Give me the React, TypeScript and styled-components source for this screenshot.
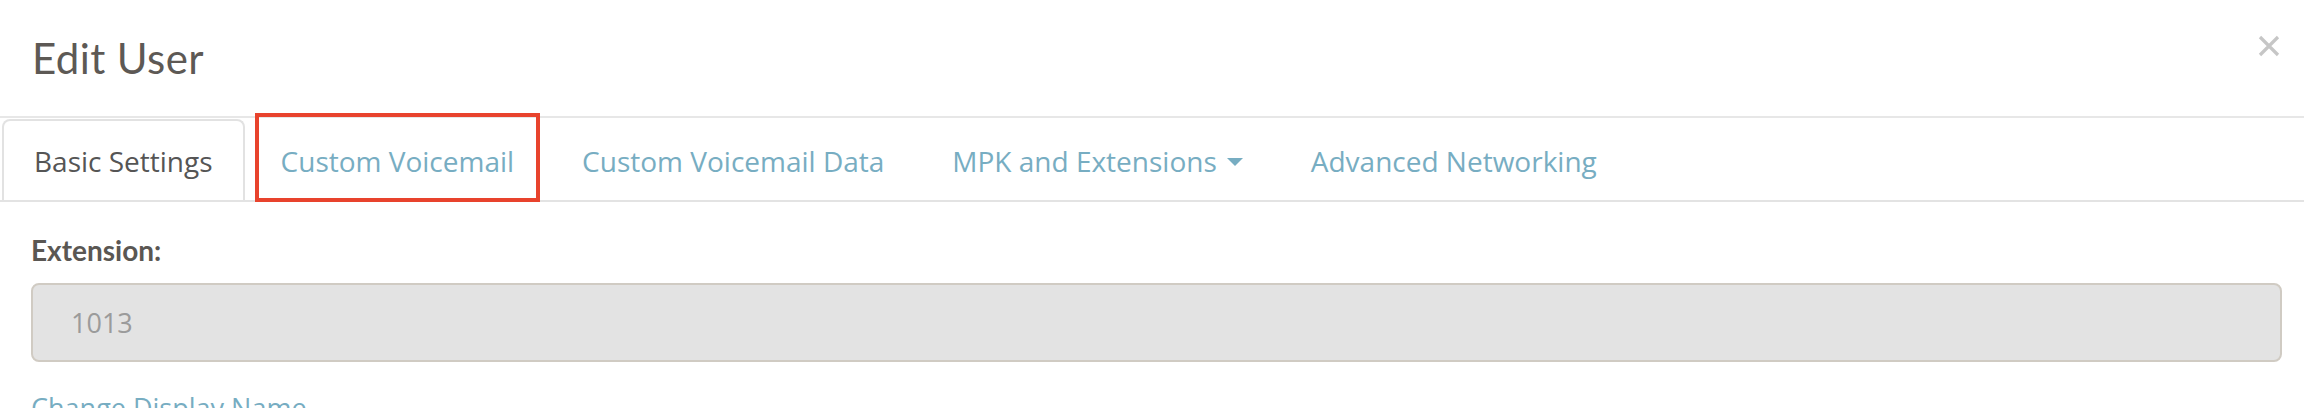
import React from "react";
import styled, { createGlobalStyle } from "styled-components";

const GlobalStyle = createGlobalStyle`
  html, body {
    margin: 0;
    padding: 0;
    background: #ffffff;
  }
  body {
    font-family: "Open Sans", "Lato", "Liberation Sans", sans-serif;
    -webkit-font-smoothing: antialiased;
  }
`;

const Modal = styled.div`
  width: 2304px;
  height: 408px;
  overflow: hidden;
  background: #ffffff;
`;

const Header = styled.div`
  height: 118px;
  box-sizing: border-box;
  padding: 0 24px 0 32px;
  display: flex;
  align-items: center;
  justify-content: space-between;
  border-bottom: 2px solid #e7e7e7;
`;

const Title = styled.h1`
  margin: 0;
  font-family: "Lato", "Open Sans", sans-serif;
  font-size: 42px;
  font-weight: 400;
  color: #5d5955;
  letter-spacing: 0.4px;
`;

const CloseButton = styled.button`
  align-self: flex-start;
  margin-top: 35px;
  width: 22px;
  height: 22px;
  padding: 0;
  border: none;
  background: transparent;
  display: flex;
  cursor: pointer;
`;

const TabBar = styled.div`
  display: flex;
  padding: 1px 0 0 2px;
  border-bottom: 2px solid #e3e3e3;
`;

const Tab = styled.div<{ $active?: boolean }>`
  position: relative;
  height: 81px;
  box-sizing: border-box;
  margin-right: 4px;
  padding: 0 30px;
  display: flex;
  align-items: center;
  gap: 10px;
  font-size: 28px;
  color: ${(p) => (p.$active ? "#555555" : "#77adc2")};
  background: #ffffff;
  border: 2px solid ${(p) => (p.$active ? "#e2e2e2" : "transparent")};
  border-bottom: none;
  border-radius: 8px 8px 0 0;
  white-space: nowrap;
`;

const Highlight = styled.span`
  position: absolute;
  left: 4px;
  right: 4px;
  top: -8px;
  bottom: -2px;
  border: 4px solid #e8432d;
  pointer-events: none;
`;

const Caret = styled.span`
  width: 0;
  height: 0;
  border-left: 8px solid transparent;
  border-right: 8px solid transparent;
  border-top: 8px solid #77adc2;
  margin-top: 2px;
`;

const Body = styled.div`
  padding: 32px 22px 0 31px;
  display: flex;
  flex-direction: column;
`;

const Label = styled.label`
  font-family: "Lato", "Open Sans", sans-serif;
  font-size: 28px;
  line-height: 1.2;
  font-weight: 700;
  color: #5a5753;
`;

const ReadOnlyInput = styled.div`
  margin-top: 15px;
  height: 79px;
  box-sizing: border-box;
  padding-left: 38px;
  display: flex;
  align-items: center;
  background: #e3e3e3;
  border: 2px solid #d0cbc3;
  border-radius: 8px;
  font-size: 27px;
  color: #9b9b9b;
`;

const LinkText = styled.a`
  margin-top: 30px;
  font-size: 27px;
  line-height: 1.2;
  color: #77adc2;
  text-decoration: none;
`;

export default function App() {
  return (
    <>
      <GlobalStyle />
      <Modal>
        <Header>
          <Title>Edit User</Title>
          <CloseButton aria-label="Close">
            <svg width="22" height="22" viewBox="0 0 22 22">
              <path d="M2 2 L20 20 M20 2 L2 20" stroke="#c6c6c6" strokeWidth="3.2" strokeLinecap="butt" />
            </svg>
          </CloseButton>
        </Header>
        <TabBar>
          <Tab $active>Basic Settings</Tab>
          <Tab>
            Custom Voicemail
            <Highlight />
          </Tab>
          <Tab>Custom Voicemail Data</Tab>
          <Tab>
            MPK and Extensions
            <Caret />
          </Tab>
          <Tab>Advanced Networking</Tab>
        </TabBar>
        <Body>
          <Label>Extension:</Label>
          <ReadOnlyInput>1013</ReadOnlyInput>
          <LinkText href="#">Change Display Name</LinkText>
        </Body>
      </Modal>
    </>
  );
}
